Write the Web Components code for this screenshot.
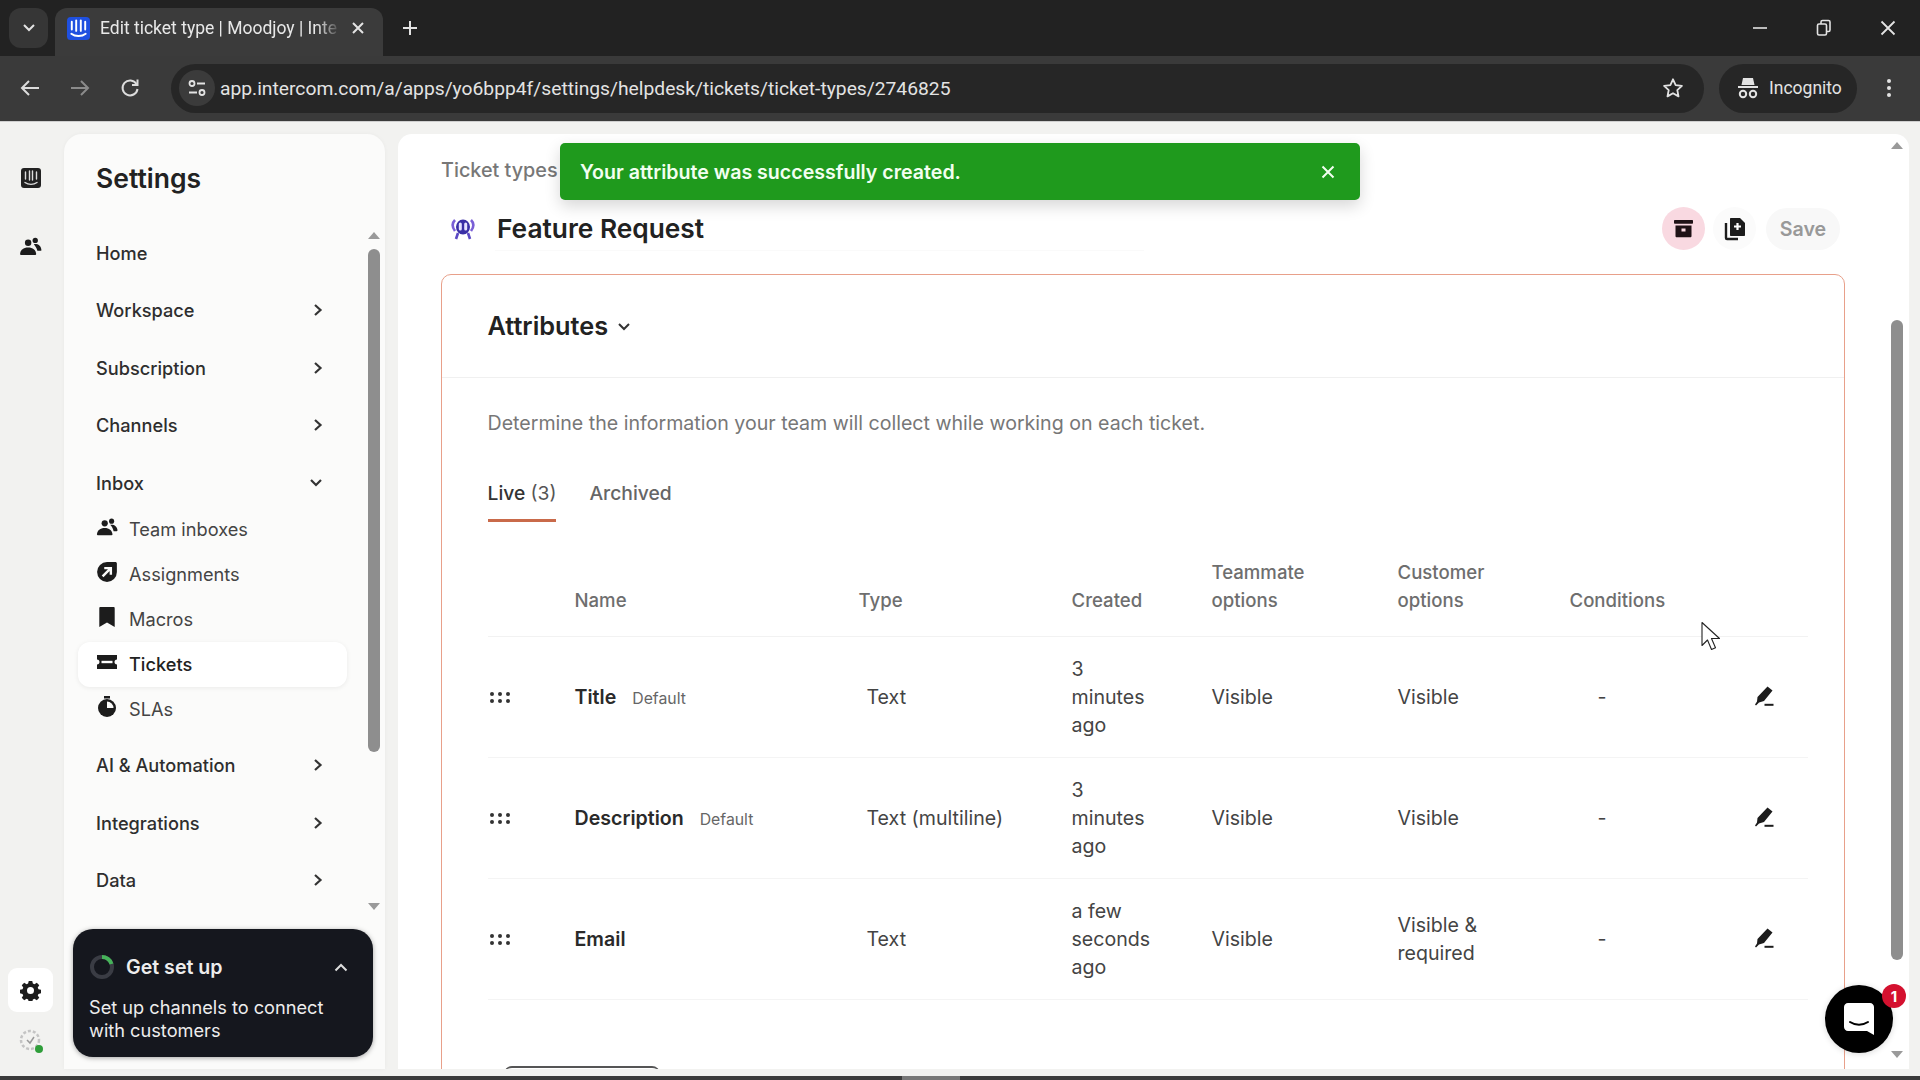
<!DOCTYPE html>
<html>
<head>
<meta charset="utf-8">
<title>Edit ticket type | Moodjoy | Intercom</title>
<style>
html, body { margin: 0; height: 100%; overflow: hidden; }
body { width: 1920px; height: 1080px; display: flex; flex-direction: column; background: #f2f2f0; font-family: Inter, sans-serif; }
.taskbar { height: 4px; flex: none; background: linear-gradient(90deg, #3b3b3b 47%, #777 47%, #777 50%, #3b3b3b 50%); }
</style>
</head>
<body>
<browser-chrome></browser-chrome>
<settings-page>
  <app-rail slot="rail"></app-rail>
  <settings-sidebar slot="sidebar">
    <nav-item>Home</nav-item>
    <nav-item chevron="right">Workspace</nav-item>
    <nav-item chevron="right">Subscription</nav-item>
    <nav-item chevron="right">Channels</nav-item>
    <nav-item chevron="down">Inbox</nav-item>
    <nav-sub icon="team" style="margin-top:-5px">Team inboxes</nav-sub>
    <nav-sub icon="assign">Assignments</nav-sub>
    <nav-sub icon="macro">Macros</nav-sub>
    <nav-sub icon="ticket" active>Tickets</nav-sub>
    <nav-sub icon="sla">SLAs</nav-sub>
    <nav-item chevron="right" style="margin-top:5px">AI &amp; Automation</nav-item>
    <nav-item chevron="right">Integrations</nav-item>
    <nav-item chevron="right">Data</nav-item>
  </settings-sidebar>
  <ticket-panel slot="main">
    <attributes-card>
      <attr-row label="Title" tag="Default" created="3 minutes ago" team="Visible" customer="Visible"></attr-row>
      <attr-row label="Description" tag="Default" type="Text (multiline)" created="3 minutes ago" team="Visible" customer="Visible"></attr-row>
      <attr-row label="Email" created="a few seconds ago" team="Visible" customer="Visible &amp; required"></attr-row>
    </attributes-card>
  </ticket-panel>
</settings-page>
<div class="taskbar"></div>

<script>
(function () {
    const ICONS = {
        team: `<svg viewBox="0 0 24 20" width="100%" height="100%" fill="currentColor"><circle cx="9.5" cy="6" r="3.4"/><circle cx="17" cy="3.6" r="2.8"/><path d="M1 18c.4-4.6 3.6-7 8.5-7s8 2.400 8.500 7c0 .6-.4 1-1 1H2c-.6 0-1-.4-1-1z"/><path d="M15.500 7.600c4-.7 7.500 1.300 8 6 0 .6-.3.9-.9.9h-3.400c-.7-2.900-2-5-3.700-6.900z"/></svg>`,
        assign: `<svg viewBox="0 0 20 20" width="100%" height="100%"><path fill="currentColor" d="M10 1h7.500C18.400 1 19 1.600 19 2.500V10a9 9 0 1 1-9-9z"/><path fill="none" stroke="#fbfbfa" stroke-width="2.2" d="M6 14l7-7M7.500 6.500H13.500V12.500"/></svg>`,
        macro: `<svg viewBox="0 0 16 20" width="100%" height="100%" fill="currentColor"><path d="M1 2c0-.6.4-1 1-1h12c.6 0 1 .4 1 1v17l-7-4-7 4z"/></svg>`,
        ticket: `<svg viewBox="0 0 22 16" width="100%" height="100%" fill="currentColor"><path d="M1 1h20v4.500c-1.600 0-2.500 1.100-2.500 2.500s.9 2.500 2.500 2.500V15H1v-4.500c1.600 0 2.500-1.100 2.500-2.500S2.600 5.500 1 5.500z"/><rect x="5.500" y="6.800" width="11" height="2.400" fill="#fff"/></svg>`,
        sla: `<svg viewBox="0 0 20 22" width="100%" height="100%"><rect x="7" y="0" width="6" height="2.500" fill="currentColor"/><circle cx="10" cy="12" r="9" fill="currentColor"/><path d="M10 12V5.500a6.500 6.500 0 0 1 6.500 6.500z" fill="#fbfbfa"/></svg>`,
        gear: `<svg viewBox="0 0 24 24" width="100%" height="100%" fill="currentColor" fill-rule="evenodd"><path d="M10 1h4l.7 3.100 1.800.8 2.700-1.700 2.800 2.800-1.700 2.700.8 1.800 3 .7v4l-3 .7-.8 1.800 1.700 2.700-2.800 2.800-2.700-1.700-1.800.8-.7 3h-4l-.7-3-1.800-.8-2.700 1.700-2.800-2.800 1.700-2.700-.8-1.800-3-.7v-4l3-.7.8-1.800-1.700-2.700 2.800-2.800 2.700 1.700 1.800-.8zM12 8a4 4 0 1 0 0 8 4 4 0 0 0 0-8z"/></svg>`
    };

    function define(name, css, html, setup) {
        const template = document.createElement("template");
        template.innerHTML = `<style>${css}</style>${html}`;
        customElements.define(name, class extends HTMLElement {
            constructor() {
                super();
                this.attachShadow({ mode: "open" });
                this.shadowRoot.appendChild(template.content.cloneNode(true));
            }
            connectedCallback() {
                if (setup) setup(this, this.shadowRoot);
            }
        });
    }

    /* Browser frame */
    define("browser-chrome", `
    :host { display: block; flex: none; height: 122px; font-family: Roboto, sans-serif; color: #e3e3e3; }
    .strip { height: 56px; background: #222222; display: flex; align-items: flex-end; padding-left: 9px; box-sizing: border-box; }
    .search { width: 39px; height: 40px; margin-bottom: 8px; border-radius: 12px; background: #363636; display: flex; align-items: center; justify-content: center; }
    .tab { width: 328px; height: 48px; margin-left: 7px; background: #3b3b3b; border-radius: 12px 12px 0 0; display: flex; align-items: center; padding: 0 14px 8px 12px; box-sizing: border-box; }
    .favicon { width: 23px; height: 23px; flex: none; }
    .title { font-size: 17.5px; margin-left: 10px; width: 241px; white-space: nowrap; overflow: hidden; color: #e8e8e8;
        -webkit-mask-image: linear-gradient(90deg, #000 90%, transparent 100%); }
    .close { margin-left: 9px; width: 16px; height: 16px; flex: none; }
    .plus { margin-left: 18px; margin-bottom: 19px; width: 18px; height: 18px; }
    .win { margin-left: auto; display: flex; align-self: center; align-items: center; gap: 48px; padding-right: 24px; }
    .toolbar { height: 66px; background: #3a3a3a; display: flex; align-items: center; box-sizing: border-box; padding-bottom: 1px; border-bottom: 1px solid #cfcfcf; }
    .nav { display: flex; align-items: center; padding-left: 20px; gap: 30px; width: 171px; box-sizing: border-box; }
    .url { width: 1533px; height: 49px; border-radius: 25px; background: #262626; display: flex; align-items: center; box-sizing: border-box; padding: 0 20px 0 8px; }
    .site { width: 36px; height: 36px; border-radius: 50%; background: #3b3b3b; display: flex; align-items: center; justify-content: center; flex: none; }
    .addr { margin-left: 5px; font-size: 19.25px; flex: 1; white-space: nowrap; }
    .incog { margin-left: 15px; width: 138px; height: 49px; border-radius: 25px; background: #262626; display: flex; align-items: center; box-sizing: border-box; padding-left: 19px; gap: 11px; font-size: 17.5px; }
    .menu { margin-left: 30px; }
    `, `
    <div class="strip">
        <div class="search"><svg width="14" height="10" viewBox="0 0 14 10" fill="none" stroke="#e3e3e3" stroke-width="2"><path d="M2 2l5 5 5-5"/></svg></div>
        <div class="tab">
            <svg class="favicon" viewBox="0 0 24 24"><rect width="24" height="24" rx="4" fill="#1f50e0"/><g stroke="#fff" stroke-width="2" stroke-linecap="round" fill="none"><path d="M5 5v8M9.600 3.500v11M14.400 3.500v11M19 5v8M4.500 17.500c4 3.200 11 3.200 15 0"/></g></svg>
            <span class="title">Edit ticket type | Moodjoy | Inte</span>
            <svg class="close" viewBox="0 0 16 16" stroke="#e3e3e3" stroke-width="2"><path d="M3 3l10 10M13 3L3 13"/></svg>
        </div>
        <svg class="plus" viewBox="0 0 18 18" stroke="#e3e3e3" stroke-width="2"><path d="M9 2v14M2 9h14"/></svg>
        <div class="win">
            <svg width="16" height="16" viewBox="0 0 16 16" stroke="#e3e3e3" stroke-width="1.6"><path d="M1 8h14"/></svg>
            <svg width="16" height="18" viewBox="0 0 16 18" fill="none" stroke="#e3e3e3" stroke-width="1.6"><rect x="1.5" y="5" width="9" height="11" rx="1.5"/><path d="M5 5V3c0-1 .6-1.500 1.500-1.500h6c1 0 1.500.6 1.500 1.500v8c0 1-.5 1.500-1.500 1.500h-2"/></svg>
            <svg width="16" height="16" viewBox="0 0 16 16" stroke="#e3e3e3" stroke-width="1.8"><path d="M1.500 1.500l13 13M14.500 1.500l-13 13"/></svg>
        </div>
    </div>
    <div class="toolbar">
        <div class="nav">
            <svg width="20" height="18" viewBox="0 0 20 18" fill="none" stroke="#dcdcdc" stroke-width="2"><path d="M19 9H3M9 2L2 9l7 7"/></svg>
            <svg width="20" height="18" viewBox="0 0 20 18" fill="none" stroke="#8b8b8b" stroke-width="2"><path d="M1 9h16M11 2l7 7-7 7"/></svg>
            <svg width="20" height="20" viewBox="0 0 20 20" fill="none" stroke="#dcdcdc" stroke-width="2"><path d="M16.500 6A7.500 7.500 0 1 0 17.500 11"/><path d="M17.500 1.500V7h-5.500"/></svg>
        </div>
        <div class="url">
            <div class="site"><svg width="20" height="20" viewBox="0 0 20 20" fill="none" stroke="#e3e3e3" stroke-width="1.8"><circle cx="5" cy="5.500" r="2.500"/><path d="M10 5.500h8M2 14.500h8"/><circle cx="15" cy="14.500" r="2.500"/></svg></div>
            <span class="addr">app.intercom.com/a/apps/yo6bpp4f/settings/helpdesk/tickets/ticket-types/2746825</span>
            <svg width="22" height="22" viewBox="0 0 24 24" fill="none" stroke="#e3e3e3" stroke-width="2" stroke-linejoin="round"><path d="M12 2.500l2.900 6.300 6.800.8-5 4.700 1.300 6.800-6-3.400-6 3.400 1.300-6.800-5-4.700 6.800-.8z"/></svg>
        </div>
        <div class="incog">
            <svg width="20" height="22" viewBox="0 0 20 22" fill="#e3e3e3"><path d="M5 1h10l1.500 7h-13z"/><rect x="0" y="9" width="20" height="2"/><g fill="none" stroke="#e3e3e3" stroke-width="2"><circle cx="5" cy="17" r="3.200"/><circle cx="15" cy="17" r="3.200"/></g></svg>
            <span>Incognito</span>
        </div>
        <svg class="menu" width="4" height="20" viewBox="0 0 4 20" fill="#e3e3e3"><circle cx="2" cy="3" r="2"/><circle cx="2" cy="10" r="2"/><circle cx="2" cy="17" r="2"/></svg>
    </div>
    `);

    /* Page shell */
    define("settings-page", `
    :host { display: flex; flex: 1; min-height: 0; padding: 12px 0 7px 0; box-sizing: border-box; }
    `, `
    <slot name="rail"></slot><slot name="sidebar"></slot><slot name="main"></slot>
    `);

    define("app-rail", `
    :host { display: flex; flex-direction: column; align-items: center; width: 64px; flex: none; padding: 34px 3px 0 0; box-sizing: border-box; color: #1c1c1c; }
    .logo { width: 20px; height: 20px; }
    .team { width: 23px; height: 19px; margin-top: 49px; }
    .gear { margin-top: auto; width: 45px; height: 44px; background: #fff; border-radius: 9px; display: flex; align-items: center; justify-content: center; }
    .gear span { width: 21px; height: 21px; display: block; }
    .me { position: relative; width: 26px; height: 26px; margin: 15px 0 16px; }
    .me i { position: absolute; right: 1px; bottom: 0; width: 8px; height: 8px; border-radius: 50%; background: #2f9e3a; }
    `, `
    <svg class="logo" viewBox="0 0 20 20"><rect width="20" height="20" rx="3" fill="#222"/><g stroke="#ddd" stroke-width="1.4" stroke-linecap="round" fill="none"><path d="M4.500 4v7M8.500 3v9M11.500 3v9M15.500 4v7M4 14.500c3.500 2.500 8.500 2.500 12 0"/></g></svg>
    <span class="team">${ICONS.team}</span>
    <div class="gear"><span>${ICONS.gear}</span></div>
    <div class="me">
        <svg viewBox="0 0 26 26" width="26" height="26" fill="none"><circle cx="12" cy="13" r="9" stroke="#c4c4c4" stroke-width="2.5" stroke-dasharray="3 2"/><path d="M9 13l3 3 4-6" stroke="#999" stroke-width="1.5"/></svg>
        <i></i>
    </div>
    `);

    define("page-scrollbar", `
    :host { display: flex; flex-direction: column; align-items: center; width: 13px; flex: none; }
    .up, .down { width: 0; height: 0; border-left: 6px solid transparent; border-right: 6px solid transparent; flex: none; }
    .up { border-bottom: 7px solid #9a9a9a; }
    .down { border-top: 7px solid #9a9a9a; margin-top: auto; }
    .thumb { width: 12px; background: #8e8e8e; border-radius: 6px; flex: none; height: var(--thumb, 100px); margin-top: var(--gap, 8px); }
    `, `
    <div class="up"></div><div class="thumb"></div><div class="down"></div>
    `);

    /* Sidebar */
    define("settings-sidebar", `
    :host { display: flex; flex-direction: column; width: 321px; flex: none; background: #fbfbfa; border-radius: 18px 18px 0 0; box-shadow: 0 0 4px rgba(0,0,0,.04); }
    h1 { margin: 0; padding: 26px 0 0 32px; height: 64px; font-size: 26.5px; line-height: 36px; font-weight: 600; color: #222; }
    .body { display: flex; height: 694px; }
    .nav { width: 269px; margin-left: 14px; }
    page-scrollbar { margin-left: 20px; padding: 8px 0 8px; --thumb: 503px; --gap: 10px; }
    `, `
    <h1>Settings</h1>
    <div class="body">
        <div class="nav"><slot></slot></div>
        <page-scrollbar></page-scrollbar>
    </div>
    <setup-card></setup-card>
    `);

    define("nav-item", `
    :host { display: flex; align-items: center; justify-content: space-between; height: 57.5px; padding: 0 24px 0 18px; box-sizing: border-box; font-size: 18.2px; font-weight: 500; color: #2e2e2e; }
    svg { display: none; }
    :host([chevron="right"]) .r, :host([chevron="down"]) .d { display: block; }
    `, `
    <span><slot></slot></span>
    <svg class="r" width="10" height="14" viewBox="0 0 10 14" fill="none" stroke="#333" stroke-width="2.2"><path d="M2 2l5.500 5L2 12"/></svg>
    <svg class="d" width="14" height="10" viewBox="0 0 14 10" fill="none" stroke="#333" stroke-width="2.2"><path d="M2 2l5 5 5-5"/></svg>
    `);

    define("nav-sub", `
    :host { display: flex; align-items: center; height: 45px; padding-left: 18px; box-sizing: border-box; font-size: 18.2px; color: #444; border-radius: 12px; }
    :host([active]) { background: #fff; color: #222; font-weight: 500; box-shadow: 0 1px 5px rgba(0,0,0,.07); }
    .ic { width: 22px; height: 22px; margin-right: 11px; color: #1c1c1c; display: flex; align-items: center; justify-content: center; flex: none; transform: translateY(-2px); }
    `, `
    <span class="ic"></span><span><slot></slot></span>
    `, (el, root) => {
        root.querySelector(".ic").innerHTML = ICONS[el.getAttribute("icon")];
    });

    define("setup-card", `
    :host { display: block; margin: 11px 12px 12px 9px; height: 128px; background: #15171e; border-radius: 20px; color: #ededed; box-sizing: border-box; padding: 22px 20px 0 16px; box-shadow: 0 1px 5px rgba(0,0,0,.35); }
    .top { display: flex; align-items: center; height: 32px; }
    b { font-size: 19.6px; font-weight: 600; margin-left: 11px; }
    .chev { margin-left: auto; margin-right: 5px; }
    p { margin: 13px 0 0; font-size: 18.2px; line-height: 22.5px; font-weight: 400; }
    `, `
    <div class="top">
        <svg width="26" height="26" viewBox="0 0 26 26" fill="none" stroke-width="4"><circle cx="13" cy="13" r="10" stroke="#3a3c44"/><path d="M13 3a10 10 0 0 1 9.500 7" stroke="#46b35a"/></svg>
        <b>Get set up</b>
        <svg class="chev" width="14" height="9" viewBox="0 0 14 9" fill="none" stroke="#ddd" stroke-width="2"><path d="M1.500 7.500L7 2l5.500 5.500"/></svg>
    </div>
    <p>Set up channels to connect with customers</p>
    `);

    /* Main panel */
    define("ticket-panel", `
    :host { display: flex; position: relative; flex: none; width: 1511px; margin-left: 13px; background: #fff; border-radius: 14px 14px 0 0; overflow: hidden; box-sizing: border-box; }
    .content { width: 1447px; padding: 22px 0 0 43px; box-sizing: border-box; flex: none; }
    .crumb { font-size: 19.8px; line-height: 28px; font-weight: 500; color: #777; }
    .head { display: flex; align-items: center; height: 43px; margin-top: 23px; margin-bottom: 24px; width: 1404px; }
    .req { width: 24px; height: 22px; margin-left: 10px; flex: none; }
    h2 { margin: 0 0 0 22px; font-size: 26.3px; font-weight: 600; color: #222; }
    .rule { position: absolute; left: 97px; top: 116px; width: 649px; height: 1px; background: #fafafa; }
    .actions { margin-left: auto; display: flex; align-items: center; gap: 8px; margin-right: 5px; }
    .round { width: 43px; height: 43px; border-radius: 50%; display: flex; align-items: center; justify-content: center; }
    .pink { background: #f9d9e1; }
    .soft { background: #fbfbfb; }
    .save { height: 42px; width: 74px; margin-left: 2px; border-radius: 21px; background: #f8f8f8; color: #999; font-weight: 600; font-size: 19.6px; display: flex; align-items: center; justify-content: center; }
    page-scrollbar { margin-left: 45px; padding: 8px 0 11px; --thumb: 640px; --gap: 171px; }
    .cursor { position: absolute; left: 1302px; top: 487px; }
    `, `
    <div class="content">
        <div class="crumb">Ticket types</div>
        <div class="head">
            <svg class="req" viewBox="0 0 24 22"><path d="M4 2C1 5 1 9 4 13M20 2c3 3 3 7 0 11" fill="none" stroke="#7a5fd6" stroke-width="2.6"/><ellipse cx="12" cy="9" rx="7" ry="7.500" fill="#3a2fa6"/><rect x="7.800" y="4.500" width="3" height="8" rx="1.500" fill="#e6e2ff"/><rect x="13.200" y="4.500" width="3" height="8" rx="1.500" fill="#e6e2ff"/><path d="M7 15l-2 6M17 15l2 6" stroke="#5a48c4" stroke-width="2.6"/></svg>
            <h2>Feature Request</h2>
            <div class="actions">
                <div class="round pink"><svg width="21" height="21" viewBox="0 0 21 21" fill="#1f1216"><rect x="1" y="2" width="19" height="3.800" rx=".8"/><path d="M2.500 7.500h16V18c0 .8-.5 1.300-1.300 1.300H3.800c-.8 0-1.300-.5-1.300-1.300z"/><rect x="8.500" y="10.500" width="4" height="3" fill="#f9d9e1"/></svg></div>
                <div class="round soft"><svg width="22" height="24" viewBox="0 0 22 24"><path d="M7 1h9l5 5v12c0 .6-.4 1-1 1H7c-.6 0-1-.4-1-1V2c0-.6.4-1 1-1z" fill="#1c1c1c"/><path d="M13.500 6v7M10 9.500h7" stroke="#fff" stroke-width="2.2"/><path d="M2 6v15c0 .6.400 1 1 1h11" fill="none" stroke="#1c1c1c" stroke-width="2.4"/></svg></div>
                <div class="save">Save</div>
            </div>
        </div>
        <slot></slot>
    </div>
    <page-scrollbar></page-scrollbar>
    <div class="rule"></div>
    <success-toast>Your attribute was successfully created.</success-toast>
    <messenger-launcher></messenger-launcher>
    <svg class="cursor" width="22" height="32" viewBox="0 0 22 32"><path d="M2 1.500v23l5.500-5.500 4 9.500 4-1.800-4-9.200h8z" fill="#fff" stroke="#222" stroke-width="1.1" stroke-linejoin="round"/></svg>
    `);

    define("success-toast", `
    :host { position: absolute; left: 162px; top: 9px; width: 800px; height: 57px; background: #1f9a1d; color: #f2fff0; border-radius: 5px; display: flex; align-items: center; padding: 0 20px; box-sizing: border-box; font-size: 19.6px; font-weight: 600; box-shadow: 0 6px 16px rgba(0,0,0,.16); }
    svg { margin-left: auto; margin-right: 5px; }
    `, `
    <slot></slot>
    <svg width="14" height="14" viewBox="0 0 14 14" stroke="#f2fff0" stroke-width="2"><path d="M1.500 1.500l11 11M12.500 1.500l-11 11"/></svg>
    `);

    define("messenger-launcher", `
    :host { position: absolute; left: 1427px; top: 851px; width: 68px; height: 68px; background: #000; border-radius: 50%; display: flex; align-items: center; justify-content: center; box-shadow: 0 1px 6px rgba(0,0,0,.15); }
    .badge { position: absolute; right: -13px; top: -1px; width: 24px; height: 24px; border-radius: 50%; background: #d4112f; color: #fff; font-size: 15px; font-weight: 700; display: flex; align-items: center; justify-content: center; }
    `, `
    <svg width="30" height="32" viewBox="0 0 30 32"><path d="M4 0h22c2.200 0 4 1.800 4 4v28l-7-4H4c-2.200 0-4-1.800-4-4V4c0-2.200 1.800-4 4-4z" fill="#fff"/><path d="M6 19c5 3.500 13 3.500 18 0" fill="none" stroke="#000" stroke-width="2" stroke-linecap="round"/></svg>
    <span class="badge">1</span>
    `);

    /* Attributes card and table */
    const COLUMNS = "87px 284px 213px 140px 186px 172px 175px 63px";

    define("attributes-card", `
    :host { display: block; width: 1404px; height: 900px; box-sizing: border-box; border: 1.5px solid #e8a08a; border-radius: 10px; font-size: 19.6px; line-height: 28px; color: #444; }
    .top { height: 103px; display: flex; align-items: center; padding: 0 45.5px; border-bottom: 1.5px solid #f0f0f0; box-sizing: border-box; }
    .top b { font-size: 25.3px; font-weight: 600; color: #222; }
    .top svg { margin-left: 9px; margin-top: 1px; }
    .body { padding: 0 36px 0 45.5px; }
    .intro { margin: 31px 0 0; color: #777; }
    .tabs { display: flex; gap: 33px; margin-top: 42px; font-size: 19.3px; font-weight: 500; color: #666; }
    .live { color: #333; padding-bottom: 12px; border-bottom: 3px solid #c96a4a; }
    .live em { font-style: normal; font-weight: 400; color: #555; }
    .heads { display: grid; grid-template-columns: ${COLUMNS}; align-items: end; margin-top: 36px; padding-bottom: 21.5px; border-bottom: 1.5px solid #f2f2f2; color: #6e6e6e; font-size: 18.6px; font-weight: 500; }
    .heads span:first-child { grid-column: 2; }
    .heads span { max-width: 130px; }
    .next { width: 156px; height: 8px; margin: 66px 0 0 16px; border-top: 2px solid #555; border-radius: 8px 8px 0 0; }
    `, `
    <div class="top">
        <b>Attributes</b>
        <svg width="14" height="9" viewBox="0 0 14 9" fill="none" stroke="#333" stroke-width="2"><path d="M2 2l5 5 5-5"/></svg>
    </div>
    <div class="body">
        <p class="intro">Determine the information your team will collect while working on each ticket.</p>
        <div class="tabs"><span class="live">Live <em>(3)</em></span><span>Archived</span></div>
        <div class="heads">
            <span>Name</span><span>Type</span><span>Created</span><span>Teammate options</span><span>Customer options</span><span>Conditions</span>
        </div>
        <slot></slot>
        <div class="next"></div>
    </div>
    `);

    define("attr-row", `
    :host { display: grid; grid-template-columns: ${COLUMNS}; align-items: center; height: 121.2px; box-sizing: border-box; border-bottom: 1.5px solid #f4f4f4; }
    .grip { display: grid; grid-template-columns: repeat(3, 4px); gap: 3px 4px; margin: 2px 0 0 2px; }
    .grip i { width: 4px; height: 4px; border-radius: 50%; background: #333; }
    .cell { margin-top: 2px; }
    .name { font-weight: 600; color: #2a2a2a; }
    .tag { font-size: 15.8px; color: #666; margin-left: 16px; font-weight: 400; }
    .type { margin-left: 8px; }
    .created { max-width: 85px; }
    .cust { max-width: 120px; }
    .dash { padding-left: 28px; }
    svg { margin: -1px 0 0 9px; }
    `, `
    <div class="grip"><i></i><i></i><i></i><i></i><i></i><i></i></div>
    <div class="cell"><span class="name"></span><span class="tag"></span></div>
    <span class="type"></span>
    <span class="created"></span>
    <span class="team"></span>
    <span class="cust"></span>
    <span class="dash">-</span>
    <svg width="20" height="20" viewBox="0 0 20 20"><path d="M13.500 .5L18.500 4.500 10 15 5 16.500 2 19.500 1 18.500 3 15.500 3.500 11z" fill="#1c1c1c"/><path d="M10.500 18.800h9" stroke="#1c1c1c" stroke-width="2"/></svg>
    `, (el, root) => {
        const text = (sel, attr, fallback) => root.querySelector(sel).textContent = el.getAttribute(attr) || fallback || "";
        text(".name", "label");
        text(".tag", "tag");
        text(".type", "type", "Text");
        text(".created", "created");
        text(".team", "team");
        text(".cust", "customer");
    });
})();
</script>
</body>
</html>
